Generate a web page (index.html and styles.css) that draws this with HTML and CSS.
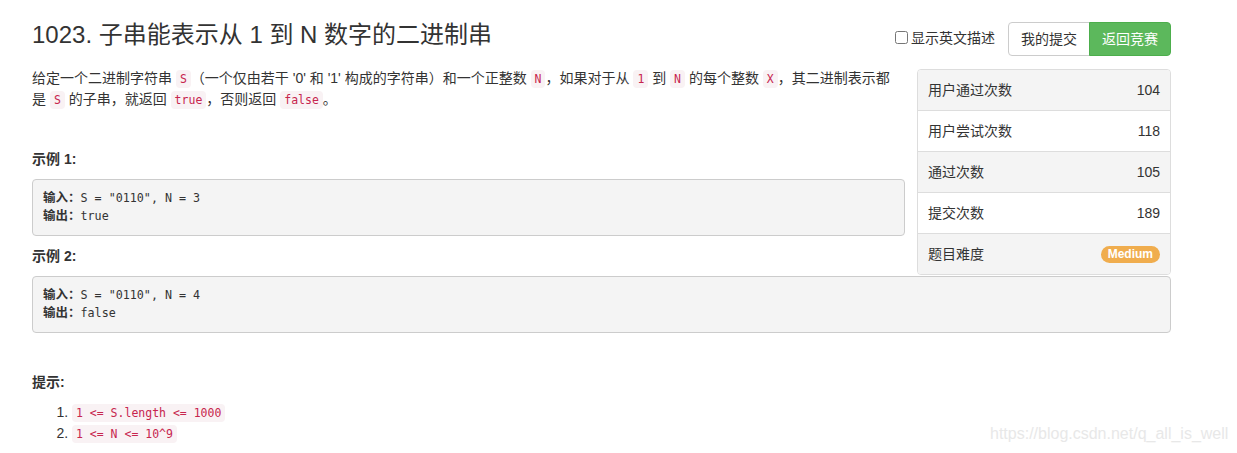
FILE: index.html
```html
<!DOCTYPE html>
<html lang="zh-CN">

<head>
    <meta charset="UTF-8">
    <meta name="viewport" content="width=device-width, initial-scale=1.0">
    <title>1023. 子串能表示从 1 到 N 数字的二进制串</title>
    <link rel="stylesheet" href="styles.css">
</head>
<body>
    <div class="page">
        <div class="header">
            <h3 class="title">1023. 子串能表示从 1 到 N 数字的二进制串</h3>
            <div class="actions">
                <label class="lang-toggle">
                    <input type="checkbox">
                    <span>显示英文描述</span>
                </label>
                <div class="btn-group">
                    <button class="btn btn-default">我的提交</button>
                    <button class="btn btn-success">返回竞赛</button>
                </div>
            </div>
        </div>

        <ul class="stats">
            <li><span>用户通过次数</span><span>104</span></li>
            <li><span>用户尝试次数</span><span>118</span></li>
            <li><span>通过次数</span><span>105</span></li>
            <li><span>提交次数</span><span>189</span></li>
            <li><span>题目难度</span><span class="badge">Medium</span></li>
        </ul>

        <div class="content">
            <p class="desc">给定一个二进制字符串 <code>S</code>（一个仅由若干 '0' 和 '1' 构成的字符串）和一个正整数 <code>N</code>，如果对于从 <code>1</code> 到 <code>N</code> 的每个整数 <code>X</code>，其二进制表示都是 <code>S</code> 的子串，就返回 <code>true</code>，否则返回 <code>false</code>。</p>

            <p class="gap">&nbsp;</p>

            <p class="label"><strong>示例 1:</strong></p>
            <pre><strong>输入：</strong>S = "0110", N = 3
<strong>输出：</strong>true</pre>

            <p class="label"><strong>示例 2:</strong></p>
            <pre><strong>输入：</strong>S = "0110", N = 4
<strong>输出：</strong>false</pre>

            <p class="gap">&nbsp;</p>

            <p class="label"><strong>提示:</strong></p>
            <ol>
                <li><code>1 &lt;= S.length &lt;= 1000</code></li>
                <li><code>1 &lt;= N &lt;= 10^9</code></li>
            </ol>
        </div>
    </div>

    <div class="watermark">https://blog.csdn.net/q_all_is_well</div>
</body>

</html>
```

FILE: styles.css
```css
body {
    font-family: "Liberation Sans", "Noto Sans CJK SC", sans-serif;
    font-size: 14px;
    line-height: 20px;
    color: #333;
    background-color: #fff;
    margin: 0;
    padding: 0;
}

.page {
    width: 1139px;
    padding-left: 32px;
}

.header {
    display: flex;
    justify-content: space-between;
    align-items: flex-start;
    margin-top: 20px;
    margin-bottom: 12px;
}

.title {
    margin: 0;
    font-size: 24px;
    font-weight: normal;
    line-height: 30px;
}

.actions {
    display: flex;
    align-items: center;
    margin-top: 2px;
}

.lang-toggle {
    display: flex;
    align-items: center;
    font-size: 14px;
    margin-right: 13px;
    margin-top: -3px;
}

.lang-toggle input {
    margin: 0 3px 0 0;
    width: 13px;
    height: 13px;
}

.btn-group {
    display: flex;
}

.btn {
    font-family: inherit;
    font-size: 14px;
    line-height: 20px;
    padding: 6px 12px;
    border: 1px solid #ccc;
    white-space: nowrap;
    cursor: pointer;
}

.btn-default {
    background-color: #fff;
    color: #333;
    border-radius: 4px 0 0 4px;
}

.btn-success {
    background-color: #5cb85c;
    border-color: #4cae4c;
    color: #fff;
    border-radius: 0 4px 4px 0;
    margin-left: -1px;
}

.stats {
    float: right;
    width: 254px;
    margin: 1px 0 0 12px;
    padding: 0;
    list-style: none;
    border: 1px solid #ddd;
    border-radius: 4px;
    box-sizing: border-box;
    overflow: hidden;
}

.stats li {
    display: flex;
    justify-content: space-between;
    align-items: center;
    padding: 10px 10px;
    border-top: 1px solid #ddd;
    background-color: #f4f4f4;
}

.stats li:first-child {
    border-top: none;
}

.stats li:nth-child(even) {
    background-color: #fff;
}

.badge {
    background-color: #f0ad4e;
    color: #fff;
    font-size: 12px;
    font-weight: bold;
    line-height: 17px;
    padding: 0 7px;
    border-radius: 9px;
}

.content p {
    margin: 0 0 10px;
    line-height: 21px;
}

.content p.desc {
    max-width: 866px;
}

.content p.label {
    margin-bottom: 9px;
}

.content p.gap {
    margin-bottom: 8px;
}

code {
    font-family: "DejaVu Sans Mono", monospace;
    font-size: 11.5px;
    line-height: 1;
    padding: 2px 4px;
    color: #c7254e;
    background-color: #f9f2f4;
    border-radius: 4px;
}

pre {
    overflow: auto;
    margin: 0 0 10px;
    padding: 9px 10px 10px;
    font-family: "DejaVu Sans Mono", monospace;
    font-size: 11.7px;
    line-height: 18px;
    color: #333;
    background-color: #f4f4f4;
    border: 1px solid #ccc;
    border-radius: 4px;
}

pre strong {
    font-family: "Liberation Sans", "Noto Sans CJK SC", sans-serif;
    font-size: 12.5px;
}

ol {
    margin: 0;
    padding-left: 40px;
    line-height: 21px;
}

.watermark {
    position: absolute;
    left: 990px;
    top: 424px;
    font-family: "Liberation Sans", sans-serif;
    font-size: 16px;
    color: #e8e8e8;
}
```
